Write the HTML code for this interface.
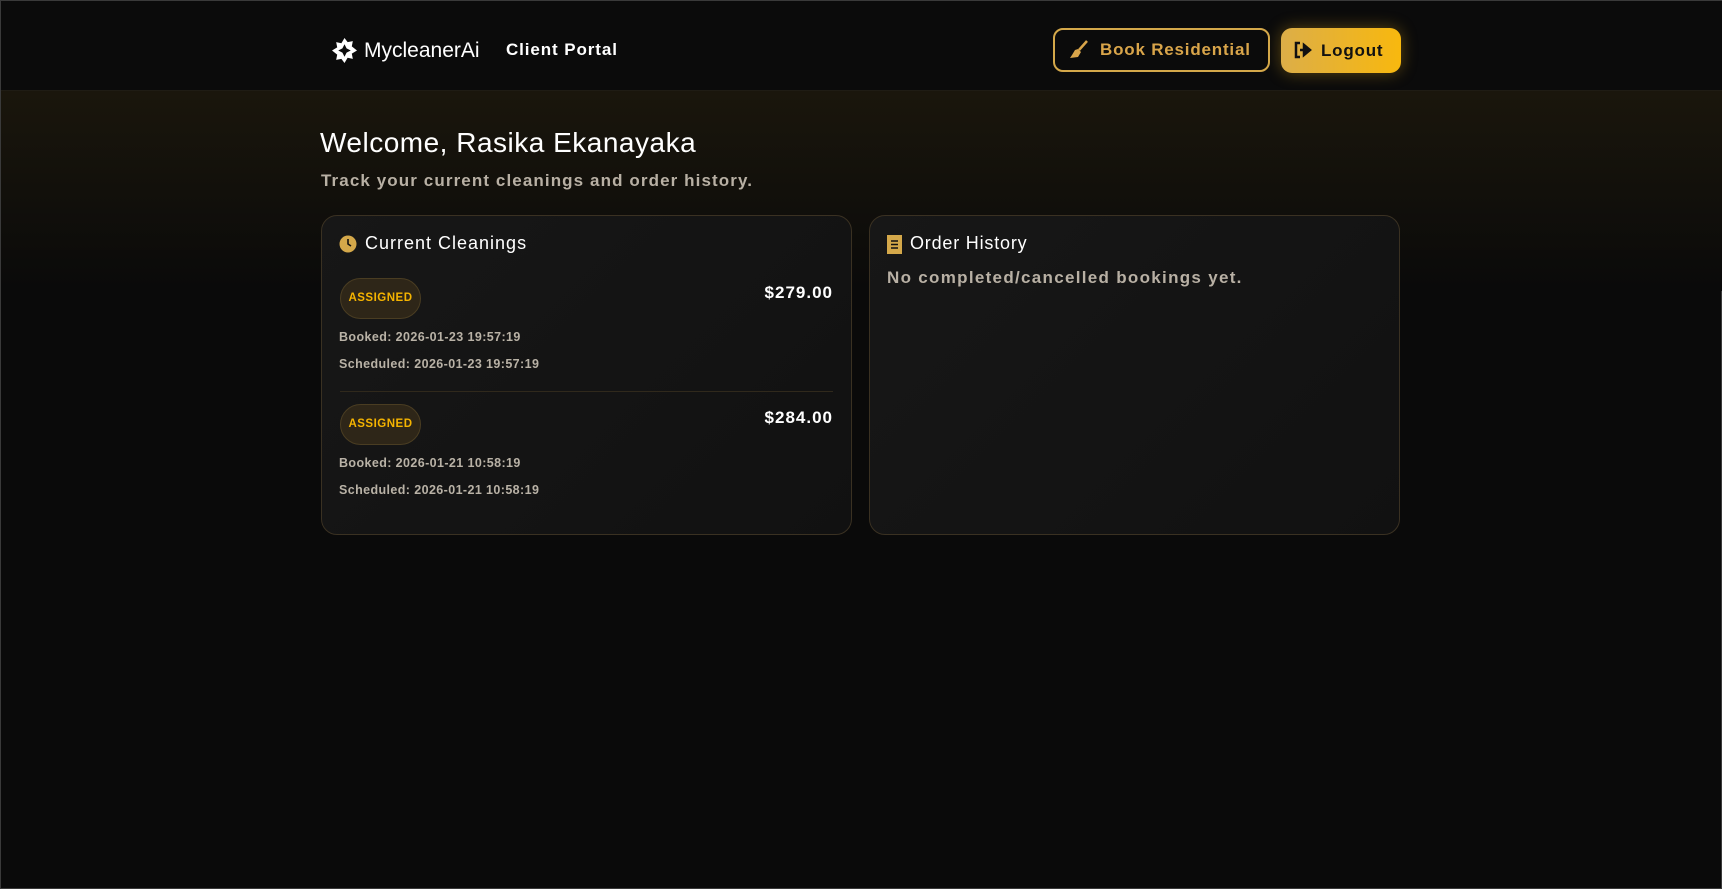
<!DOCTYPE html>
<html><head><meta charset="utf-8"><style>
*{box-sizing:border-box;margin:0;padding:0}
body{width:1722px;height:889px;overflow:hidden;background:#0a0a0a;font-family:"Liberation Sans",sans-serif;position:relative;border:1px solid #3a3a3a}
.hdr{position:absolute;left:0;top:0;width:1722px;height:90px;background:#0b0b0b;border-bottom:1px solid #1f1c14}
.glow{position:absolute;left:0;top:90px;width:1722px;height:200px;background:linear-gradient(#1a160c,#0a0a0a)}
.abs{position:absolute}
.card{position:absolute;top:214px;height:320px;width:531px;border:1px solid #3a3122;border-radius:16px;background:linear-gradient(135deg,#171717,#111)}
.badge{position:absolute;left:18px;width:81px;height:41px;border-radius:21px;background:#2e2618;border:1px solid #4a3d22;color:#f5b400;font-weight:bold;font-size:11.5px;text-align:center;line-height:39px;letter-spacing:.5px}
.price{position:absolute;right:18px;color:#fff;font-weight:bold;font-size:17px;letter-spacing:1px}
.sm{position:absolute;left:17px;color:#b9b2a6;font-weight:bold;font-size:12.5px;letter-spacing:.4px}
</style></head><body>
<div class="hdr"></div><div class="glow"></div>
<svg class="abs" style="left:331px;top:37px" width="25" height="25" viewBox="0 0 24 24"><path fill="#fff" d="M12 0l3 4 5-1-1 5 5 4-5 3 1 5-5-1-3 5-3-4-5 1 1-5-5-4 5-3-1-5 5 1z"/><path fill="#0b0b0b" d="M12 6l2 4 4 2-4 2-2 4-2-4-4-2 4-2z"/></svg>
<div class="abs" style="left:363px;top:38px;color:#fff;font-size:21px;letter-spacing:0">MycleanerAi</div>
<div class="abs" style="left:505px;top:39px;color:#fff;font-size:17px;font-weight:bold;letter-spacing:.9px">Client Portal</div>
<div class="abs" style="left:1052px;top:27px;width:217px;height:44px;border:2px solid #d4a84a;border-radius:10px;color:#d9a54a;font-weight:bold;font-size:17px;line-height:40px;padding-left:45px;letter-spacing:.8px">Book Residential</div>
<svg class="abs" style="left:1068px;top:39px" width="20" height="20" viewBox="0 0 20 20"><path d="M18 1L10 10" stroke="#d9a54a" stroke-width="2.5"/><path fill="#d9a54a" d="M9 9l3 3-3 5-8 1 2-3 3-5z"/></svg>
<div class="abs" style="left:1280px;top:27px;width:120px;height:45px;border-radius:11px;background:linear-gradient(90deg,#dcae48,#f8b80e);box-shadow:0 0 16px rgba(240,180,30,.35);color:#111;font-weight:bold;font-size:17px;line-height:45px;padding-left:40px;letter-spacing:.8px">Logout</div>
<svg class="abs" style="left:1293px;top:40px" width="18" height="18" viewBox="0 0 18 18"><path d="M6 2H2v14h4" stroke="#111" stroke-width="2.5" fill="none"/><path d="M6 9h6M10 4l6 5-6 5z" stroke="#111" stroke-width="2.5" fill="#111"/></svg>
<div class="abs" style="left:319px;top:126px;color:#fff;font-size:28px;letter-spacing:.5px">Welcome, Rasika Ekanayaka</div>
<div class="abs" style="left:320px;top:170px;color:#b8b0a4;font-size:17px;font-weight:bold;letter-spacing:1.1px">Track your current cleanings and order history.</div>
<div class="card" style="left:320px">
<svg class="abs" style="left:17px;top:19px" width="18" height="18" viewBox="0 0 18 18"><circle cx="9" cy="9" r="8.5" fill="#d4a84a"/><path d="M9 4v5l3 2" stroke="#111" stroke-width="1.6" fill="none"/></svg>
<div class="abs" style="left:43px;top:17px;color:#fff;font-size:18px;letter-spacing:1px">Current Cleanings</div>
<div class="badge" style="top:62px">ASSIGNED</div>
<div class="price" style="top:67px">$279.00</div>
<div class="sm" style="top:114px">Booked: 2026-01-23 19:57:19</div>
<div class="sm" style="top:141px">Scheduled: 2026-01-23 19:57:19</div>
<div class="abs" style="left:18px;right:18px;top:175px;height:1px;background:#30291c"></div>
<div class="badge" style="top:188px">ASSIGNED</div>
<div class="price" style="top:192px">$284.00</div>
<div class="sm" style="top:240px">Booked: 2026-01-21 10:58:19</div>
<div class="sm" style="top:267px">Scheduled: 2026-01-21 10:58:19</div>
</div>
<div class="card" style="left:868px">
<svg class="abs" style="left:17px;top:19px" width="15" height="19" viewBox="0 0 15 19"><rect width="15" height="19" fill="#d4a84a"/><path d="M4 6h7M4 9.5h7M4 13h7" stroke="#111" stroke-width="1.4"/></svg>
<div class="abs" style="left:40px;top:17px;color:#fff;font-size:18px;letter-spacing:.8px">Order History</div>
<div class="abs" style="left:17px;top:52px;color:#b8b0a4;font-size:17px;font-weight:bold;letter-spacing:1.3px">No completed/cancelled bookings yet.</div>
</div>
</body></html>
